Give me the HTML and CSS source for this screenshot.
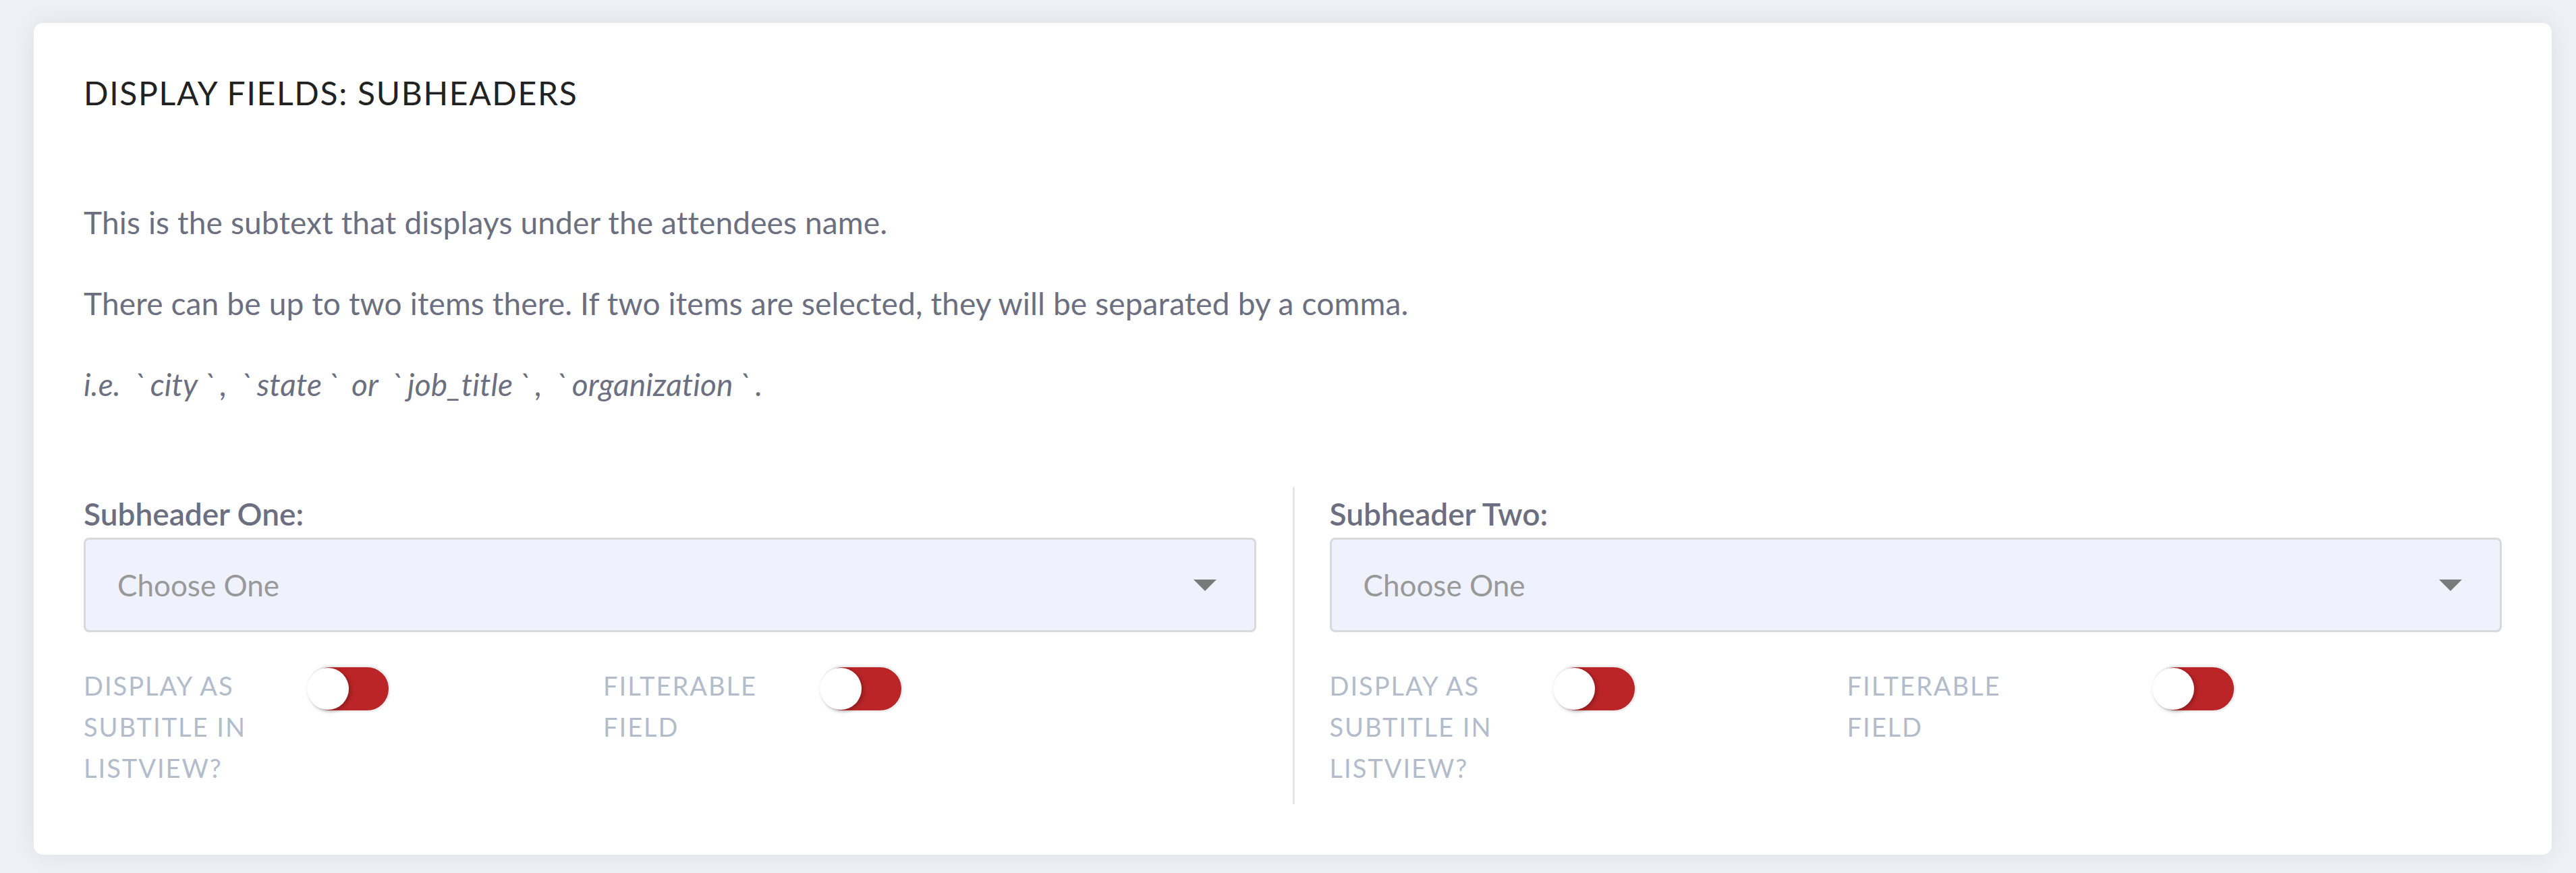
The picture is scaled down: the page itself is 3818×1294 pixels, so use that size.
FILE: index.html
```html
<!DOCTYPE html>
<html lang="en">

<head>
    <meta charset="UTF-8">
    <meta name="viewport" content="width=device-width, initial-scale=1.0">
    <title>Display Fields: Subheaders</title>
    <link rel="stylesheet" href="styles.css">
</head>

<body>
    <div class="settings-card">
        <h2 class="card-title">DISPLAY FIELDS: SUBHEADERS</h2>

        <div class="card-text">
            <p>This is the subtext that displays under the attendees name.</p>
            <p>There can be up to two items there. If two items are selected, they will be separated by a comma.</p>
            <p><em>i.e. <span class="tick">`</span>city<span class="tick">`</span>, <span class="tick">`</span>state<span class="tick">`</span> or <span class="tick">`</span>job_title<span class="tick">`</span>, <span class="tick">`</span>organization<span class="tick">`</span>.</em></p>
        </div>

        <div class="field-columns">
            <div class="field-col">
                <label class="field-label">Subheader One:</label>
                <div class="select-box">
                    <span class="select-placeholder">Choose One</span>
                    <span class="select-arrow"></span>
                </div>
                <div class="options">
                    <div class="option">
                        <span class="option-label">DISPLAY AS SUBTITLE IN LISTVIEW?</span>
                        <span class="toggle"><span class="toggle-knob"></span></span>
                    </div>
                    <div class="option option-filter">
                        <span class="option-label">FILTERABLE FIELD</span>
                        <span class="toggle"><span class="toggle-knob"></span></span>
                    </div>
                </div>
            </div>

            <div class="field-col field-col-right">
                <label class="field-label">Subheader Two:</label>
                <div class="select-box">
                    <span class="select-placeholder">Choose One</span>
                    <span class="select-arrow"></span>
                </div>
                <div class="options">
                    <div class="option option-narrow">
                        <span class="option-label">DISPLAY AS SUBTITLE IN LISTVIEW?</span>
                        <span class="toggle"><span class="toggle-knob"></span></span>
                    </div>
                    <div class="option option-wide">
                        <span class="option-label">FILTERABLE FIELD</span>
                        <span class="toggle"><span class="toggle-knob"></span></span>
                    </div>
                </div>
            </div>
        </div>
    </div>
</body>

</html>
```

FILE: styles.css
```css
body {
    margin: 0;
    padding: 34px 36px 26px 50px;
    background-color: #eff0f5;
    font-family: 'Lato', 'Open Sans', sans-serif;
}

.settings-card {
    background-color: #ffffff;
    border-radius: 14px;
    box-shadow: 0 0 34px rgba(20, 30, 80, 0.07);
    padding: 74px 74px 75px 74px;
}

.card-title {
    margin: 0;
    padding-top: 2px;
    font-size: 48px;
    line-height: 56px;
    font-weight: 400;
    letter-spacing: 1.7px;
    color: #222222;
}

.card-text {
    margin-top: 134px;
}

.card-text p {
    margin: 0 0 60px 0;
    font-size: 46px;
    line-height: 60px;
    letter-spacing: 0.15px;
    color: #6b6f80;
}

.card-text p:last-child {
    margin-bottom: 0;
}

.tick {
    margin: 0 8px;
}

.field-columns {
    display: flex;
    margin-top: 122px;
}

.field-col {
    flex: 1;
    padding: 10px 54px 23px 0;
}

.field-col-right {
    border-left: 3px solid #e3e6ea;
    padding: 10px 0 23px 52px;
}

.field-label {
    display: block;
    font-size: 46px;
    line-height: 60px;
    font-weight: 600;
    color: #6b6f80;
}

.select-box {
    margin-top: 5px;
    height: 134px;
    border: 3px solid #d9d9dd;
    border-radius: 8px;
    background-color: #eff2fd;
    display: flex;
    align-items: center;
    justify-content: space-between;
    padding: 0 56px 0 47px;
}

.select-placeholder {
    font-size: 44px;
    line-height: 60px;
    color: #999999;
}

.select-arrow {
    width: 0;
    height: 0;
    border-left: 17px solid transparent;
    border-right: 17px solid transparent;
    border-top: 17px solid #7a7a7a;
}

.options {
    display: flex;
    margin-top: 49px;
}

.option {
    display: flex;
    align-items: flex-start;
    width: 770px;
}

.option-label {
    width: 300px;
    margin-right: 31px;
    font-size: 38px;
    line-height: 61px;
    letter-spacing: 2px;
    color: #b3bccb;
}

.option-filter .option-label {
    margin-right: 21px;
}

.option-narrow {
    width: 767px;
}

.option-wide .option-label {
    margin-right: 152px;
}

.toggle {
    position: relative;
    width: 118px;
    height: 64px;
    border: 3px solid #efefef;
    border-radius: 40px;
    background-color: #bb2528;
    flex-shrink: 0;
}

.toggle-knob {
    position: absolute;
    left: -3px;
    top: 1px;
    width: 62px;
    height: 62px;
    border-radius: 50%;
    background-color: #ffffff;
    box-shadow: 3px 2px 6px rgba(0, 0, 0, 0.25);
}
```
